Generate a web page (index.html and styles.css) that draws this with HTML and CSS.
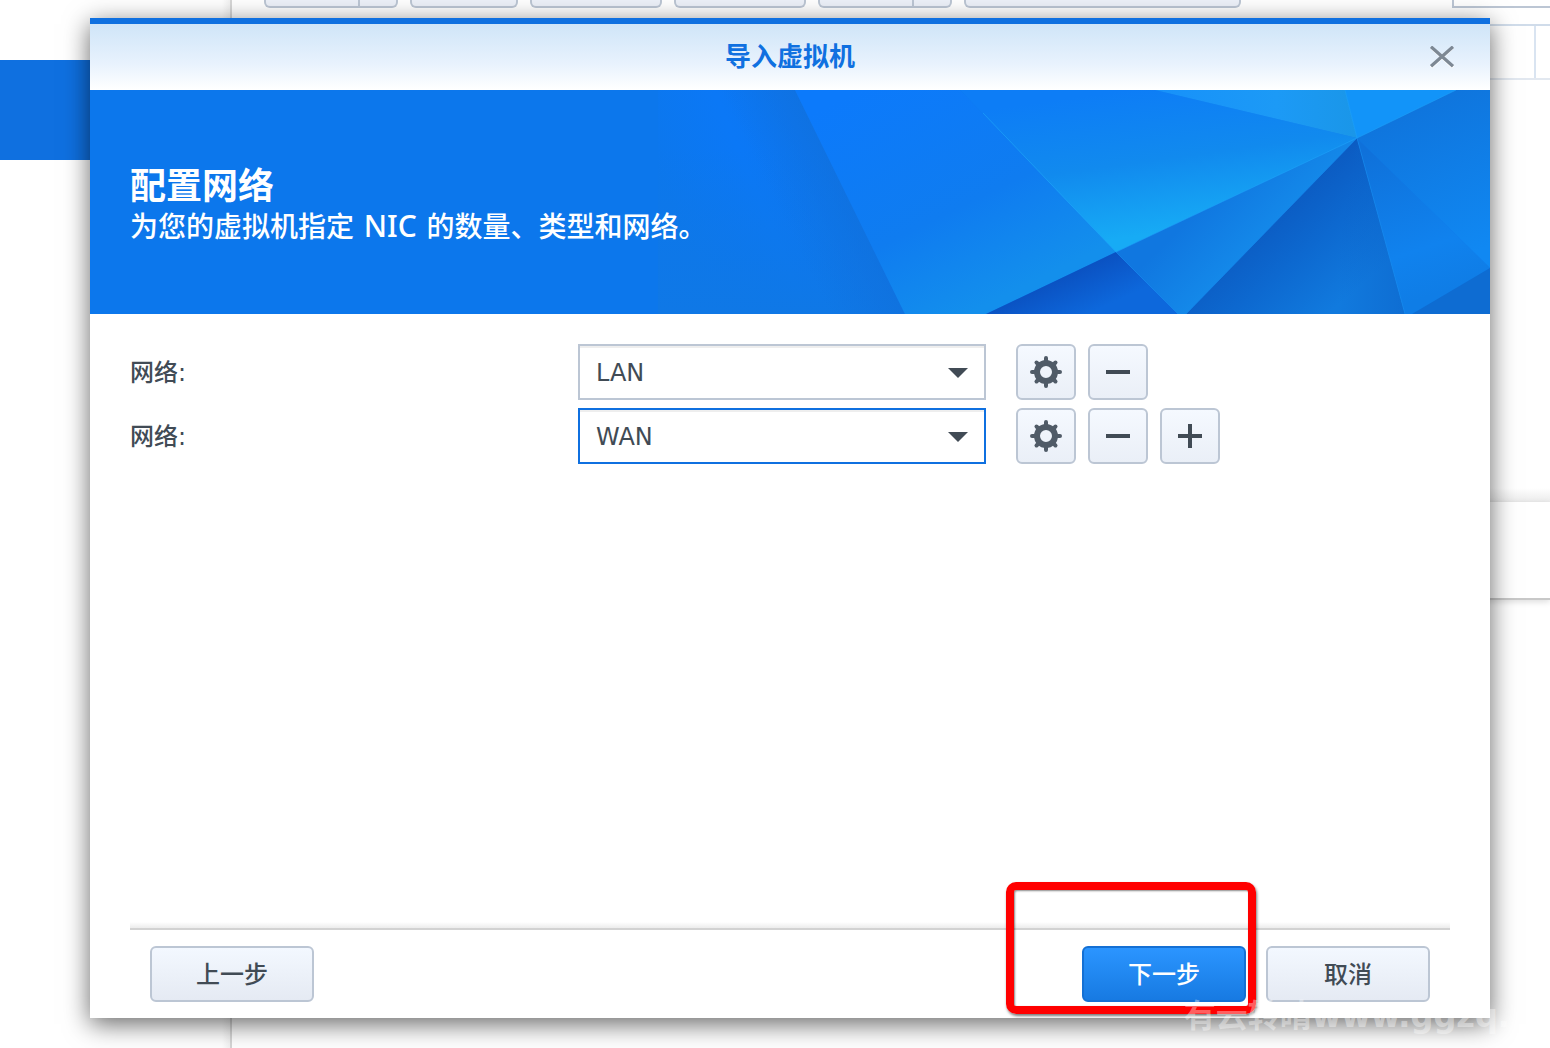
FILE: index.html
```html
<!DOCTYPE html>
<html lang="zh-CN">
<head>
<meta charset="utf-8">
<meta name="viewport" content="width=device-width, initial-scale=1">
<title>导入虚拟机</title>
<link rel="stylesheet" href="styles.css">
</head>
<body>
<div class="app" aria-hidden="true">
  <div class="sidebar"><div class="sidebar-active"></div></div>
  <div class="workspace">
    <div class="toolbar">
      <div class="tool tool-split"></div>
      <div class="tool tool-small"></div>
      <div class="tool"></div>
      <div class="tool"></div>
      <div class="tool tool-split"></div>
      <div class="tool tool-wide"></div>
      <div class="search"></div>
    </div>
    <div class="table-head"><div class="table-cell"></div></div>
    <div class="table-body"></div>
    <div class="panel"></div>
  </div>
</div>

<section class="dialog" role="dialog" aria-labelledby="dialog-title">
  <header class="titlebar">
    <h1 class="title" id="dialog-title">导入虚拟机</h1>
    <button class="close" type="button" aria-label="关闭">
      <svg width="26" height="22" viewBox="0 0 26 22"><path d="M2 1.500L24 21.500M24 1.500L2 21.500" stroke="#fff" stroke-width="3"/><path d="M2 .7L24 20.300M24 .7L2 20.300" stroke="#7d8894" stroke-width="3.200"/></svg>
    </button>
  </header>

  <div class="banner">
    <svg class="facets" width="832" height="224" viewBox="0 0 832 224" aria-hidden="true">
      <defs>
        <linearGradient id="a" gradientUnits="userSpaceOnUse" x1="0" y1="80" x2="190" y2="0"><stop offset="0" stop-color="#0c77ec"/><stop offset=".4" stop-color="#0b78f6"/><stop offset="1" stop-color="#0e74ea"/></linearGradient>
        <linearGradient id="a2" gradientUnits="userSpaceOnUse" x1="0" y1="60" x2="0" y2="224"><stop offset="0" stop-color="#0f78e6" stop-opacity="0"/><stop offset="1" stop-color="#0f78e6"/></linearGradient>
        <linearGradient id="a3" gradientUnits="userSpaceOnUse" x1="130" y1="138" x2="204" y2="102"><stop offset="0" stop-color="#1070dc" stop-opacity="0"/><stop offset="1" stop-color="#1070dc" stop-opacity=".8"/></linearGradient>
        <linearGradient id="b" gradientUnits="userSpaceOnUse" x1="200" y1="0" x2="310" y2="224"><stop offset="0" stop-color="#0c7afb"/><stop offset=".6" stop-color="#0f7cf0"/><stop offset="1" stop-color="#138fec"/></linearGradient>
        <linearGradient id="c" gradientUnits="userSpaceOnUse" x1="470" y1="0" x2="490" y2="145"><stop offset="0" stop-color="#0d7df6"/><stop offset=".5" stop-color="#118aee"/><stop offset="1" stop-color="#17abf5"/></linearGradient>
        <linearGradient id="d" x1="0" x2="1"><stop offset="0" stop-color="#1791fa"/><stop offset=".6" stop-color="#1c9af6"/><stop offset="1" stop-color="#1a96e8"/></linearGradient>
        <linearGradient id="e" gradientUnits="userSpaceOnUse" x1="730" y1="20" x2="800" y2="170"><stop offset="0" stop-color="#0f74dc"/><stop offset="1" stop-color="#1088f2"/></linearGradient>
        <linearGradient id="f" gradientUnits="userSpaceOnUse" x1="540" y1="120" x2="590" y2="170"><stop offset="0" stop-color="#1077e0"/><stop offset="1" stop-color="#148aea"/></linearGradient>
        <linearGradient id="g" gradientUnits="userSpaceOnUse" x1="590" y1="130" x2="670" y2="224"><stop offset="0" stop-color="#0b59c0"/><stop offset=".5" stop-color="#0d69d0"/><stop offset="1" stop-color="#117ade"/></linearGradient>
        <linearGradient id="h" gradientUnits="userSpaceOnUse" x1="710" y1="60" x2="760" y2="210"><stop offset="0" stop-color="#0f71da"/><stop offset=".7" stop-color="#1082ee"/><stop offset="1" stop-color="#0f7de6"/></linearGradient>
        <linearGradient id="i" gradientUnits="userSpaceOnUse" x1="410" y1="180" x2="430" y2="224"><stop offset="0" stop-color="#0a50c0"/><stop offset="1" stop-color="#0d68dc"/></linearGradient>
        <linearGradient id="j" gradientUnits="userSpaceOnUse" x1="680" y1="0" x2="745" y2="0"><stop offset="0" stop-color="#0c62c8" stop-opacity="0"/><stop offset="1" stop-color="#0c62c8"/></linearGradient>
      </defs>
      <path fill="url(#a)" d="M0 0H137L247 224H0z"/><path fill="url(#a2)" d="M0 0H137L247 224H0z"/><path fill="url(#a3)" d="M0 0H137L247 224H0z"/>
      <path fill="url(#b)" d="M137 0H302L458 162L328 224H247z"/>
      <path fill="url(#c)" d="M302 0H497L699 48L458 162z"/>
      <path fill="url(#d)" d="M497 0H687L699 48z"/>
      <path fill="#1294f9" d="M687 0H798L699 48z"/>
      <path fill="url(#e)" d="M798 0H832V178L699 48z"/>
      <path fill="url(#f)" d="M699 48L458 162L520 224H528z"/>
      <path fill="url(#g)" d="M699 48L528 224H747z"/>
      <path fill="url(#j)" d="M699 48L670 224H747z" opacity=".5"/>
      <path fill="url(#h)" d="M699 48L747 224H756L832 178z"/>
      <path fill="#0e6cd2" d="M832 178V224H754z"/>
      <path fill="url(#i)" d="M458 162L328 224H520z"/>
      <path fill="none" stroke="#20a6fa" stroke-opacity=".6" d="M798 0L699 48L458 162M687 0L699 48M325 23L458 162"/>
      <path fill="none" stroke="#198ff0" stroke-opacity=".6" d="M699 48L528 224M699 48L747 224M458 162L520 224"/>
    </svg>
    <div class="banner-copy">
      <h2 class="heading">配置网络</h2>
      <p class="subtitle">为您的虚拟机指定<span class="latin"> NIC </span>的数量、类型和网络。</p>
    </div>
  </div>

  <form class="content">
    <div class="row">
      <label class="label" for="net1">网络:</label>
      <div class="select-wrap">
        <select class="select" id="net1"><option selected>LAN</option><option>WAN</option></select>
        <svg class="arrow" width="20" height="10" viewBox="0 0 20 10"><path d="M0 0H20L10 10z" fill="#414b55"/></svg>
      </div>
      <div class="actions">
        <button class="button icon" type="button" aria-label="设置"><svg width="32" height="32" viewBox="-16 -16 32 32"><use href="#gear"/></svg></button>
        <button class="button icon" type="button" aria-label="删除"><svg width="24" height="24" viewBox="0 0 24 24"><path d="M0 10H24V14H0z" fill="#414b55"/></svg></button>
      </div>
    </div>
    <div class="row">
      <label class="label" for="net2">网络:</label>
      <div class="select-wrap">
        <select class="select select-focus" id="net2"><option>LAN</option><option selected>WAN</option></select>
        <svg class="arrow" width="20" height="10" viewBox="0 0 20 10"><path d="M0 0H20L10 10z" fill="#414b55"/></svg>
      </div>
      <div class="actions">
        <button class="button icon" type="button" aria-label="设置"><svg width="32" height="32" viewBox="-16 -16 32 32"><g id="gear" fill="none" stroke="#505b67"><circle r="9" stroke-width="6"/><path stroke-width="4" stroke-linecap="round" d="M0-14V-10M0 14V10M-14 0H-10M14 0H10M-9.500-9.500L-8-8M9.500-9.500L8-8M-9.500 9.500L-8 8M9.500 9.500L8 8"/></g></svg></button>
        <button class="button icon" type="button" aria-label="删除"><svg width="24" height="24" viewBox="0 0 24 24"><path d="M0 10H24V14H0z" fill="#414b55"/></svg></button>
        <button class="button icon" type="button" aria-label="添加"><svg width="24" height="24" viewBox="0 0 24 24"><path d="M0 10H10V0H14V10H24V14H14V24H10V14H0z" fill="#414b55"/></svg></button>
      </div>
    </div>
  </form>

  <footer class="footer">
    <button class="button step" type="button">上一步</button>
    <div class="footer-end">
      <button class="button step primary" type="button">下一步</button>
      <button class="button step" type="button">取消</button>
    </div>
    <div class="highlight" aria-hidden="true"></div>
  </footer>
</section>
<div class="watermark">有云转晴www.ggzq.</div>
</body>
</html>
```
FILE: styles.css
```css
* { box-sizing: border-box; }

body {
  position: relative;
  margin: 0;
  min-height: 100vh;
  overflow: hidden;
  background: #fff;
  color: #414b55;
  font-family: "DejaVu Sans", "Noto Sans CJK SC", sans-serif;
  font-size: 24px;
  font-weight: 500;
}

h1, h2, p { margin: 0; }

button, select { font: inherit; color: inherit; }

/* Application behind the dialog */
.app { display: flex; min-height: 100vh; }

.sidebar {
  flex: 0 0 232px;
  padding-top: 60px;
  border-right: 2px solid #d6d6d6;
  background: linear-gradient(to left, #f2f2f2, #fff 8px);
}

.sidebar-active { height: 100px; background: #0f70e0; }

.workspace { flex: 1; min-width: 0; display: flex; flex-direction: column; }

.toolbar { display: flex; gap: 12px; padding-left: 32px; height: 8px; }

.tool {
  flex: none;
  width: 132px;
  border: 2px solid #bcc6d4;
  border-top: 0;
  border-radius: 0 0 6px 6px;
  background: #edf1f9;
}

.tool-small { width: 108px; }
.tool-wide { width: 277px; }

.tool-split {
  width: 134px;
  background: linear-gradient(#bcc6d4, #bcc6d4) 92px 0 / 2px 100% no-repeat #edf1f9;
}

.search { width: 98px; margin-left: auto; border: 2px solid #bcc6d4; border-width: 0 0 2px 2px; }

.table-head {
  margin-top: 16px;
  height: 56px;
  padding-right: 14px;
  border-top: 2px solid #d0dcea;
  border-bottom: 2px solid #e2e8f0;
}

.table-cell { height: 100%; border-right: 2px solid #d9e4f1; }

.table-body { height: 422px; background: linear-gradient(to top, #ebebeb, #fff 14px); }

.panel { height: 98px; border-bottom: 2px solid #c8c8c8; box-shadow: 0 2px 6px #0002; }

/* Dialog */
.dialog {
  position: absolute;
  inset: 18px 60px 30px 90px;
  display: flex;
  flex-direction: column;
  background: #fff;
  box-shadow: 0 6px 24px #0009;
}

.titlebar {
  display: grid;
  grid-template-columns: 1fr auto 1fr;
  align-items: center;
  height: 72px;
  padding: 0 30px;
  border-top: 6px solid #0f70e0;
  background: linear-gradient(#cfe5f8, #e8f2fd 60%, #fff);
}

.title { grid-column: 2; color: #0f70e0; font-size: 26px; line-height: 36px; }

.close {
  display: grid;
  place-items: center;
  justify-self: end;
  width: 36px;
  height: 36px;
  padding: 0;
  border: 0;
  background: none;
}

.banner {
  display: grid;
  align-items: center;
  min-height: 224px;
  overflow: hidden;
  background: #0c77ec;
  color: #fff;
}

.facets, .banner-copy { grid-area: 1 / 1; }
.facets { justify-self: end; }
.banner-copy { z-index: 1; padding: 10px 40px 0; }
.heading { font-size: 36px; line-height: 42px; }
.subtitle { font-size: 28px; line-height: 40px; }
.latin { margin: 0 2px; font-family: "Noto Sans", sans-serif; font-size: 30px; line-height: 1; white-space: pre; }

.content { flex: 1; display: flex; flex-direction: column; gap: 8px; padding: 30px 40px; }

.row { display: grid; grid-template-columns: 448px 408px 1fr; align-items: center; }

.label { padding-top: 2px; line-height: 36px; }

.select-wrap { position: relative; }

.select {
  display: block;
  width: 100%;
  height: 56px;
  padding: 2px 50px 0 16px;
  border: 2px solid #bcc6d4;
  border-radius: 0;
  outline: 0;
  background: #fff;
  box-shadow: inset 0 2px #eee;
  appearance: none;
}

.select-focus { border-color: #0f70e0; }

.arrow { position: absolute; top: 24px; right: 18px; pointer-events: none; }

.actions { display: flex; gap: 12px; padding-left: 30px; }

.button {
  height: 56px;
  padding: 0;
  border: 2px solid #bcc6d4;
  border-radius: 6px;
  background: linear-gradient(#f3f8ff, #e5eaf3);
}

.icon { display: grid; place-items: center; width: 60px; background: linear-gradient(#f5f9ff, #eaeff7); }

.step { width: 164px; padding-bottom: 4px; }

.primary { border-color: #1470d4; background: linear-gradient(#2b95ff, #177ae2); color: #fff; }

.footer {
  position: relative;
  display: flex;
  justify-content: space-between;
  margin: 0 40px;
  padding: 24px 20px 16px;
  background: linear-gradient(#fff, #ececec 6px, #d2d2d2 6px, #d2d2d2 8px, #fff 8px);
}

.footer-end { display: flex; gap: 20px; }

/* Marker around the next-step button */
.highlight {
  position: absolute;
  right: 194px;
  bottom: 4px;
  width: 250px;
  height: 132px;
  border: 8px solid #f00;
  border-radius: 10px;
  box-shadow: 1px 2px 3px #0008, inset 1px 1px 2px #0007;
  pointer-events: none;
}

.watermark {
  position: absolute;
  right: 40px;
  bottom: 12px;
  color: #fff6;
  font-size: 32px;
  font-weight: bold;
  line-height: 40px;
  white-space: nowrap;
}
```
